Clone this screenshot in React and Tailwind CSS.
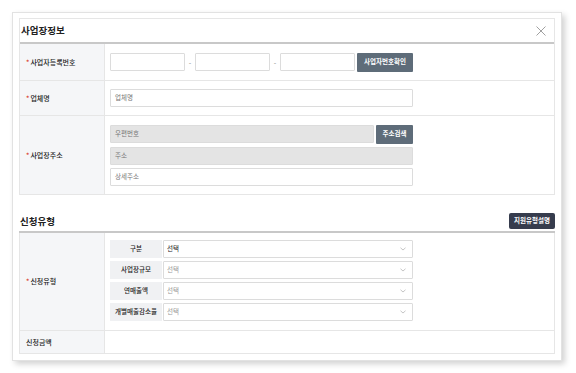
import React from 'react';

const font = { fontFamily: '"Noto Sans CJK KR", "Noto Sans", sans-serif' };

const Label = ({ required, children }) => (
    <div className="w-[85px] shrink-0 bg-[#f5f6f8] border-r border-[#e6e6e6] flex items-center pl-[6px] text-[7px] font-medium text-[#222]">
        {required && <span className="text-[#d9362b] mr-[1px]">*</span>}
        {children}
    </div>
);

const Input = ({ placeholder, className = '', grey }) => (
    <div
        className={`h-[18px] border border-[#dcdcdc] rounded-[1px] flex items-center px-[4px] text-[6.5px] text-[#777] ${grey ? 'bg-[#e4e4e4]' : 'bg-white'} ${className}`}
    >
        {placeholder}
    </div>
);

const Chevron = () => (
    <svg width="6" height="4" viewBox="0 0 6 4" className="ml-auto mr-[6px]">
        <path d="M0.5 0.8 L3 3 L5.5 0.8" stroke="#aaa" strokeWidth="0.7" fill="none" />
    </svg>
);

const SubRow = ({ label, dark }) => (
    <div className="flex gap-[1px] h-[18px]">
        <div className="w-[52px] bg-[#f0f1f3] flex items-center justify-center text-[6.5px] font-medium text-[#222]">{label}</div>
        <div className={`w-[250px] border border-[#dcdcdc] rounded-[1px] flex items-center pl-[3px] text-[6.5px] ${dark ? 'text-[#222]' : 'text-[#999]'}`}>
            선택
            <Chevron />
        </div>
    </div>
);

const App = () => {
    return (
        <div className="w-[576px] h-[373px] bg-white pt-[12px] pl-[12px]" style={font}>
            <div className="w-[550px] h-[349px] bg-white border border-[#e2e2e2] shadow-[3px_3px_6px_rgba(0,0,0,0.18)] px-[6px] pt-[5px]">
                {/* 사업장정보 */}
                <div className="border border-[#e6e6e6]">
                    <div className="h-[25px] flex items-center justify-between pl-[1px] pr-[8px] border-b-2 border-[#c8c8c8]">
                        <h2 className="text-[9.5px] font-bold text-[#222]">사업장정보</h2>
                        <svg width="10" height="10" viewBox="0 0 10 10">
                            <path d="M0.5 0.5 L9.5 9.5 M9.5 0.5 L0.5 9.5" stroke="#888" strokeWidth="0.8" />
                        </svg>
                    </div>
                    <div className="flex h-[37px] border-b border-[#e6e6e6]">
                        <Label required>사업자등록번호</Label>
                        <div className="flex items-center pl-[5px] text-[7px] text-[#888]">
                            <Input className="w-[75px]" />
                            <span className="w-[10px] text-center">-</span>
                            <Input className="w-[75px]" />
                            <span className="w-[10px] text-center">-</span>
                            <Input className="w-[75px]" />
                            <button className="ml-[2px] h-[19px] w-[56px] bg-[#5e6c79] text-white text-[6.5px] font-bold rounded-[1px]">
                                사업자번호확인
                            </button>
                        </div>
                    </div>
                    <div className="flex h-[35px] border-b border-[#e6e6e6]">
                        <Label required>업체명</Label>
                        <div className="flex items-center pl-[5px]">
                            <Input className="w-[303px]" placeholder="업체명" />
                        </div>
                    </div>
                    <div className="flex h-[78px]">
                        <Label required>사업장주소</Label>
                        <div className="flex flex-col justify-center gap-[3px] pl-[5px]">
                            <div className="flex gap-[2px]">
                                <Input className="w-[264px]" placeholder="우편번호" grey />
                                <button className="h-[19px] w-[37px] bg-[#5e6c79] text-white text-[6.5px] font-bold rounded-[1px]">
                                    주소검색
                                </button>
                            </div>
                            <Input className="w-[303px]" placeholder="주소" grey />
                            <Input className="w-[303px]" placeholder="상세주소" />
                        </div>
                    </div>
                </div>

                {/* 신청유형 */}
                <div className="h-[38px] flex items-end justify-between pl-[1px] pb-[2px] border-b-2 border-[#c8c8c8]">
                    <h2 className="text-[9.5px] font-bold text-[#222] mb-[1px]">신청유형</h2>
                    <button className="h-[16px] px-[5px] bg-[#363c4d] text-white text-[6.5px] font-bold rounded-[2px]">
                        지원유형설명
                    </button>
                </div>
                <div className="border-x border-b border-[#e6e6e6]">
                    <div className="flex h-[98px] border-b border-[#e6e6e6]">
                        <Label required>신청유형</Label>
                        <div className="flex flex-col gap-[3px] pl-[5px] pt-[7px]">
                            <SubRow label="구분" dark />
                            <SubRow label="사업장규모" />
                            <SubRow label="연매출액" />
                            <SubRow label="개별매출감소율" />
                        </div>
                    </div>
                    <div className="flex h-[22px]">
                        <Label>신청금액</Label>
                        <div />
                    </div>
                </div>
            </div>
        </div>
    );
};

export default App;
